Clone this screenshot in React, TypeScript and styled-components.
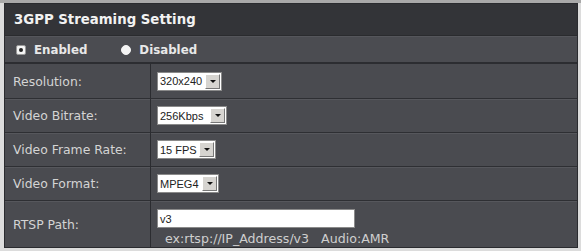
import React from "react";
import styled, { createGlobalStyle } from "styled-components";

const Global = createGlobalStyle`
  html, body { margin: 0; padding: 0; background: #d6d6d6; }
  body { width: 581px; height: 251px; overflow: hidden; }
`;

const Frame = styled.div`
  box-sizing: border-box;
  width: 581px;
  height: 251px;
  padding: 3px 3px 3px 4px;
  background: linear-gradient(#a9a9a9, #a9a9a9) top / 100% 3px no-repeat, #dcdcdc;
`;

const Panel = styled.div`
  box-sizing: border-box;
  height: 100%;
  background: #4a4b50;
  border: 1px solid #2a2b2f;
  display: flex;
  flex-direction: column;
  font-family: "DejaVu Sans", Verdana, sans-serif;
`;

const Header = styled.div`
  height: 31px;
  background: #333438;
  border-bottom: 1px solid #2a2b2e;
  display: flex;
  align-items: center;
  padding-left: 9px;
  color: #f2f2f2;
  font-weight: bold;
  font-size: 13.3px;
`;

const RadioRow = styled.div`
  height: 25px;
  background: #4b4c51;
  border-top: 1px solid #55565b;
  border-bottom: 2px solid #2c2d31;
  display: flex;
  align-items: center;
  padding-left: 11px;
  gap: 34px;
`;

const RadioItem = styled.label`
  display: flex;
  align-items: center;
  gap: 8px;
  color: #e8e8e8;
  font-weight: bold;
  font-size: 11.8px;
`;

const RadioDot = styled.span<{ $on?: boolean }>`
  box-sizing: border-box;
  width: 10px;
  height: 10px;
  border-radius: ${(p) => (p.$on ? "2px" : "50%")};
  background: #f4f4f4;
  border: 1px solid ${(p) => (p.$on ? "#9a9a9a" : "#f4f4f4")};
  display: flex;
  align-items: center;
  justify-content: center;
  &::after {
    content: "";
    width: 4px;
    height: 4px;
    border-radius: 50%;
    background: ${(p) => (p.$on ? "#222" : "transparent")};
  }
`;

const Table = styled.div`
  flex: 1;
  display: grid;
  grid-template-columns: 146px 1fr;
  grid-template-rows: repeat(4, 34px) 1fr;
`;

const Label = styled.div`
  display: flex;
  align-items: center;
  padding-left: 8px;
  color: #d4d4d4;
  font-size: 12.4px;
  border-right: 1px solid #2b2c30;
  border-top: 1px solid #2e2f33;
  box-shadow: inset 0 1px 0 #56575c;
  &:first-child { border-top: none; box-shadow: none; }
`;

const Cell = styled.div<{ $stack?: boolean }>`
  display: flex;
  flex-direction: ${(p) => (p.$stack ? "column" : "row")};
  align-items: ${(p) => (p.$stack ? "flex-start" : "center")};
  padding-left: 6px;
  padding-top: ${(p) => (p.$stack ? "8px" : "0")};
  border-top: 1px solid #2e2f33;
  box-shadow: inset 0 1px 0 #56575c;
  &:nth-child(2) { border-top: none; box-shadow: none; }
`;

const Select = styled.div<{ $w: number }>`
  box-sizing: border-box;
  width: ${(p) => p.$w}px;
  height: 19px;
  background: #ffffff;
  border: 1px solid #8a8a8a;
  display: flex;
  align-items: center;
  font-family: "Liberation Sans", Arial, sans-serif;
  font-size: 11px;
  color: #222;
`;

const SelectText = styled.span`
  flex: 1;
  padding-left: 2px;
  white-space: nowrap;
  overflow: hidden;
`;

const Arrow = styled.span`
  box-sizing: border-box;
  width: 15px;
  height: 15px;
  margin-right: 1px;
  background: #d6d4d0;
  border: 1px solid #fff;
  border-right-color: #777;
  border-bottom-color: #777;
  display: flex;
  align-items: center;
  justify-content: center;
  &::after {
    content: "";
    border-left: 3px solid transparent;
    border-right: 3px solid transparent;
    border-top: 3px solid #111;
  }
`;

const TextInput = styled.div`
  box-sizing: border-box;
  width: 198px;
  height: 19px;
  background: #fff;
  border: 1px solid #8a8a8a;
  padding-left: 2px;
  display: flex;
  align-items: center;
  font-family: "Liberation Sans", Arial, sans-serif;
  font-size: 11px;
  color: #222;
`;

const Hint = styled.div`
  margin-top: 3px;
  padding-left: 8px;
  color: #cfcfcf;
  font-size: 12.6px;
  white-space: pre;
`;

const rows: { label: string; value: string; w: number }[] = [
  { label: "Resolution:", value: "320x240", w: 65 },
  { label: "Video Bitrate:", value: "256Kbps", w: 70 },
  { label: "Video Frame Rate:", value: "15 FPS", w: 59 },
  { label: "Video Format:", value: "MPEG4", w: 62 },
];

export default function App() {
  return (
    <>
      <Global />
      <Frame>
        <Panel>
          <Header>3GPP Streaming Setting</Header>
          <RadioRow>
            <RadioItem>
              <RadioDot $on />
              Enabled
            </RadioItem>
            <RadioItem>
              <RadioDot />
              Disabled
            </RadioItem>
          </RadioRow>
          <Table>
            {rows.map((r) => (
              <React.Fragment key={r.label}>
                <Label>{r.label}</Label>
                <Cell>
                  <Select $w={r.w}>
                    <SelectText>{r.value}</SelectText>
                    <Arrow />
                  </Select>
                </Cell>
              </React.Fragment>
            ))}
            <Label>RTSP Path:</Label>
            <Cell $stack>
              <TextInput>v3</TextInput>
              <Hint>{"ex:rtsp://IP_Address/v3   Audio:AMR"}</Hint>
            </Cell>
          </Table>
        </Panel>
      </Frame>
    </>
  );
}
